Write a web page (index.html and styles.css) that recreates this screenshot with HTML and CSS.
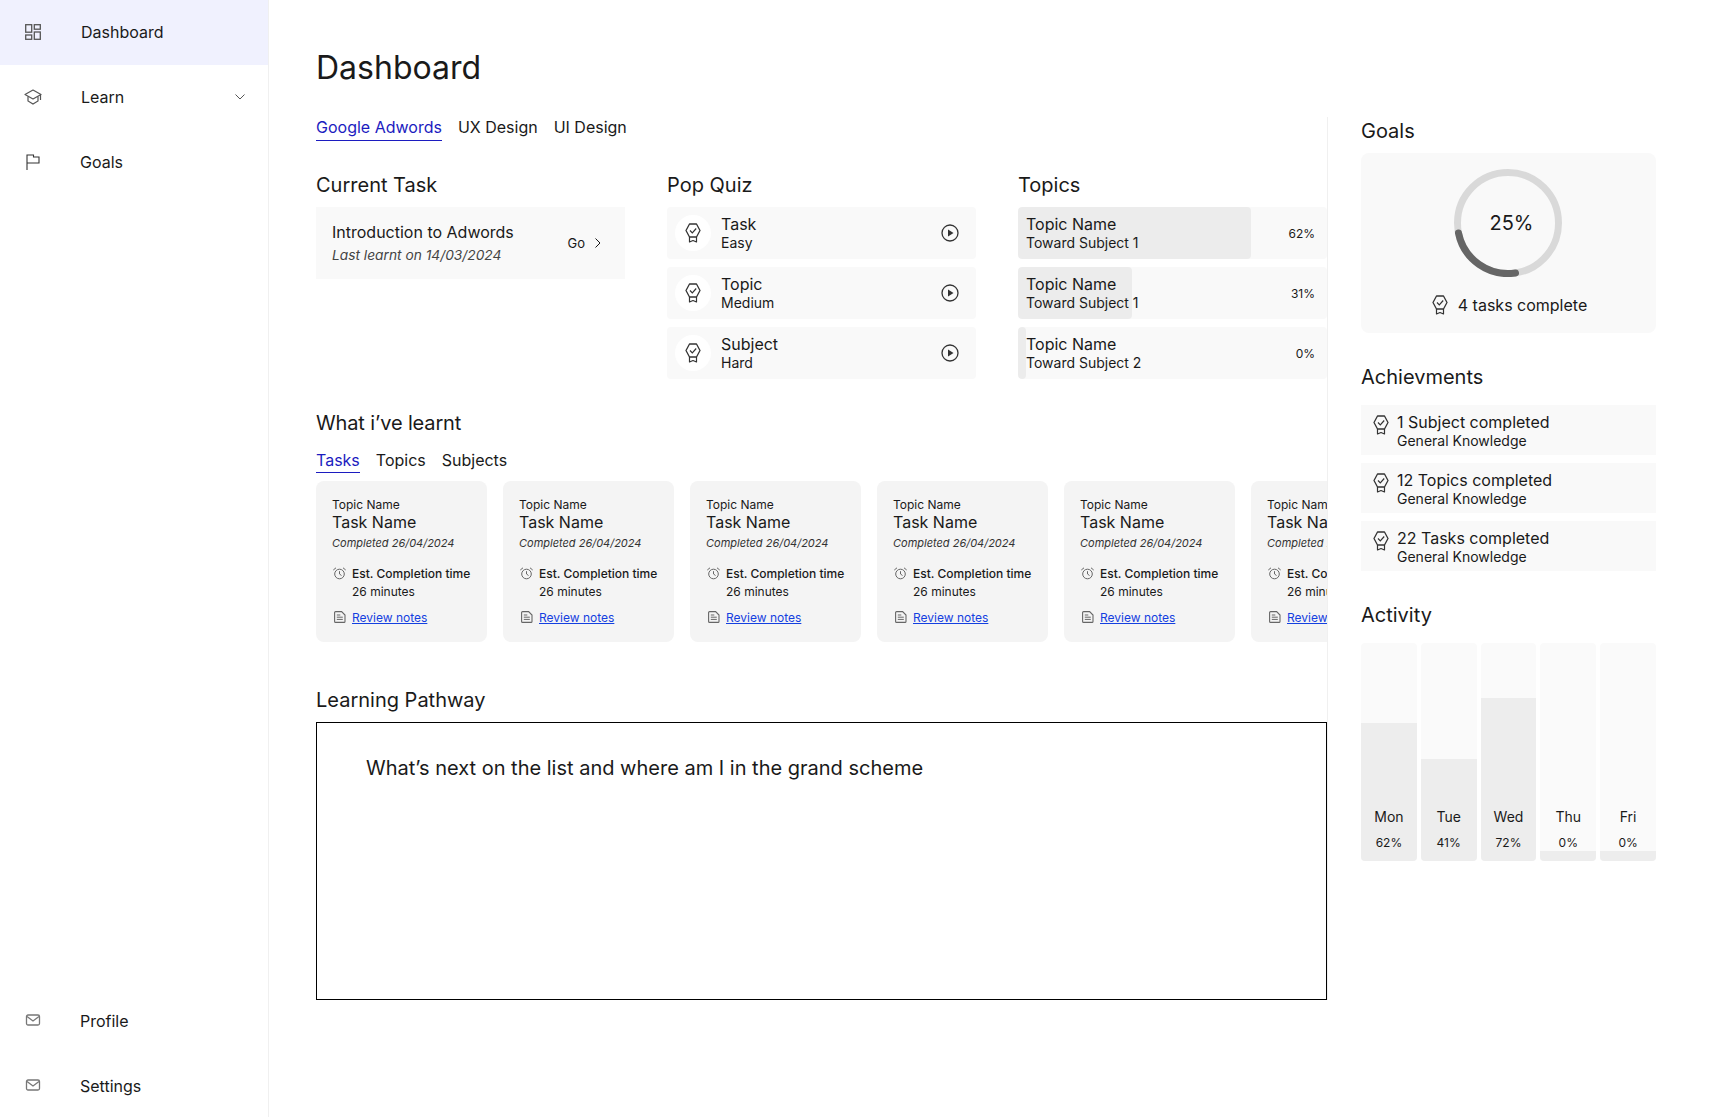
FILE: index.html
```html
<!DOCTYPE html>
<html>
<head>
  <meta charset="utf-8">
  <title>Dashboard</title>
  <link rel="stylesheet" href="styles.css">
</head>
<body>

<!-- shared icons -->
<svg class="defs" width="0" height="0">
  <symbol id="i-badge" viewBox="0 0 16 20">
    <path d="M4.500 1h7L15 7.500 11.500 14h-7L1 7.500z" fill="none" stroke="currentColor" stroke-width="1.3" stroke-linejoin="round"/>
    <path d="M5 7.500l2.300 2.300L11.200 5.500" fill="none" stroke="currentColor" stroke-width="1.2"/>
    <path d="M4.500 14v5L8 17.500l3.500 1.500v-5" fill="none" stroke="currentColor" stroke-width="1.2" stroke-linejoin="round"/>
  </symbol>
  <symbol id="i-mail" viewBox="0 0 16 12">
    <rect x="1.5" y="1" width="13" height="10" rx="1.5" fill="none" stroke="currentColor" stroke-width="1.3"/>
    <path d="M2 2.500L8 7l6-4.500" fill="none" stroke="currentColor" stroke-width="1.3"/>
  </symbol>
  <symbol id="i-play" viewBox="0 0 18 18">
    <circle cx="9" cy="9" r="8" fill="none" stroke="currentColor" stroke-width="1.3"/>
    <path d="M7 5.500v7l5.500-3.500z" fill="currentColor"/>
  </symbol>
  <symbol id="i-clock" viewBox="0 0 14 14">
    <circle cx="7.5" cy="8" r="4.800" fill="none" stroke="currentColor" stroke-width="1"/>
    <path d="M7.500 5.200V8l2 1.500M1.300 4L4 1.800M13.700 4L11 1.800" fill="none" stroke="currentColor" stroke-width="1"/>
  </symbol>
  <symbol id="i-doc" viewBox="0 0 14 14">
    <path d="M2.600 2.600a1 1 0 0 1 1-1h6l3.400 3.400v6.400a1 1 0 0 1-1 1H3.600a1 1 0 0 1-1-1z" fill="none" stroke="currentColor" stroke-width="1.1"/>
    <path d="M4.800 5h3.500M4.800 7.200h6M4.800 9.400h6" fill="none" stroke="currentColor" stroke-width="1"/>
  </symbol>
</svg>

<div class="app">

  <nav class="sidebar">
    <div class="nav-top">
      <a class="nav-item active">
        <svg class="nav-icon" viewBox="0 0 16 16"><rect x=".7" y=".7" width="6" height="7.500" fill="none" stroke="currentColor" stroke-width="1.3"/><rect x="9.300" y=".7" width="6" height="4.500" fill="none" stroke="currentColor" stroke-width="1.3"/><rect x=".7" y="11" width="6" height="4.300" fill="none" stroke="currentColor" stroke-width="1.3"/><rect x="9.300" y="8" width="6" height="7.300" fill="none" stroke="currentColor" stroke-width="1.3"/></svg>
        <span class="nav-label shifted">Dashboard</span>
      </a>
      <a class="nav-item">
        <svg class="nav-icon" viewBox="0 0 18 16"><path d="M9 1l8 4.500L9 10 1 5.500z" fill="none" stroke="currentColor" stroke-width="1.2" stroke-linejoin="round"/><path d="M4 7.500V12l5 3 5-3V7.500M16.500 5.500V11" fill="none" stroke="currentColor" stroke-width="1.2"/></svg>
        <span class="nav-label shifted">Learn</span>
        <svg class="nav-chevron" viewBox="0 0 10 6"><path d="M.5.5L5 5 9.500.5" fill="none" stroke="currentColor" stroke-width="1"/></svg>
      </a>
      <a class="nav-item">
        <svg class="nav-icon flag" viewBox="0 0 18 16"><path d="M3 16V1h6.500v2H15v6H3" fill="none" stroke="currentColor" stroke-width="1.1"/></svg>
        <span class="nav-label">Goals</span>
      </a>
    </div>
    <div class="nav-bottom">
      <a class="nav-item">
        <svg class="nav-icon mail"><use href="#i-mail"/></svg>
        <span class="nav-label">Profile</span>
      </a>
      <a class="nav-item">
        <svg class="nav-icon mail"><use href="#i-mail"/></svg>
        <span class="nav-label">Settings</span>
      </a>
    </div>
  </nav>

  <main class="main">
    <h1 class="page-title">Dashboard</h1>

    <div class="page-body">
      <div class="content">

        <div class="tabs">
          <a class="tab active">Google Adwords</a>
          <a class="tab">UX Design</a>
          <a class="tab">UI Design</a>
        </div>

        <div class="top-grid">
          <section>
            <h2 class="heading">Current Task</h2>
            <div class="current-task">
              <div>
                <div class="title-line">Introduction to Adwords</div>
                <div class="last-learnt">Last learnt on 14/03/2024</div>
              </div>
              <a class="go">Go
                <svg class="go-chevron" viewBox="0 0 6 10"><path d="M.5.5L5 5 .5 9.500" fill="none" stroke="currentColor" stroke-width="1"/></svg>
              </a>
            </div>
          </section>

          <section>
            <h2 class="heading">Pop Quiz</h2>
            <div class="row-list">
              <div class="quiz-row">
                <span class="quiz-badge"><svg class="badge"><use href="#i-badge"/></svg></span>
                <div class="quiz-text"><div class="title-line">Task</div><div class="sub-line">Easy</div></div>
                <svg class="play"><use href="#i-play"/></svg>
              </div>
              <div class="quiz-row">
                <span class="quiz-badge"><svg class="badge"><use href="#i-badge"/></svg></span>
                <div class="quiz-text"><div class="title-line">Topic</div><div class="sub-line">Medium</div></div>
                <svg class="play"><use href="#i-play"/></svg>
              </div>
              <div class="quiz-row">
                <span class="quiz-badge"><svg class="badge"><use href="#i-badge"/></svg></span>
                <div class="quiz-text"><div class="title-line">Subject</div><div class="sub-line">Hard</div></div>
                <svg class="play"><use href="#i-play"/></svg>
              </div>
            </div>
          </section>

          <section>
            <h2 class="heading">Topics</h2>
            <div class="row-list">
              <div class="topic-row">
                <div class="topic-fill" style="width: 233px"></div>
                <div class="topic-text"><div class="title-line">Topic Name</div><div class="sub-line">Toward Subject 1</div></div>
                <span class="topic-pct">62%</span>
              </div>
              <div class="topic-row">
                <div class="topic-fill" style="width: 114px"></div>
                <div class="topic-text"><div class="title-line">Topic Name</div><div class="sub-line">Toward Subject 1</div></div>
                <span class="topic-pct">31%</span>
              </div>
              <div class="topic-row">
                <div class="topic-fill" style="width: 8px"></div>
                <div class="topic-text"><div class="title-line">Topic Name</div><div class="sub-line">Toward Subject 2</div></div>
                <span class="topic-pct">0%</span>
              </div>
            </div>
          </section>
        </div>

        <section class="learnt">
          <h2 class="heading learnt-heading">What i’ve learnt</h2>
          <div class="tabs small-tabs">
            <a class="tab active">Tasks</a>
            <a class="tab">Topics</a>
            <a class="tab">Subjects</a>
          </div>
          <div class="task-cards">
            <div class="task-card">
              <div class="tc-topic">Topic Name</div>
              <div class="tc-task">Task Name</div>
              <div class="tc-date">Completed 26/04/2024</div>
              <div class="tc-est"><svg class="tc-icon"><use href="#i-clock"/></svg><div><strong>Est. Completion time</strong><br>26 minutes</div></div>
              <div class="tc-notes"><svg class="tc-icon"><use href="#i-doc"/></svg><a>Review notes</a></div>
            </div>
            <div class="task-card">
              <div class="tc-topic">Topic Name</div>
              <div class="tc-task">Task Name</div>
              <div class="tc-date">Completed 26/04/2024</div>
              <div class="tc-est"><svg class="tc-icon"><use href="#i-clock"/></svg><div><strong>Est. Completion time</strong><br>26 minutes</div></div>
              <div class="tc-notes"><svg class="tc-icon"><use href="#i-doc"/></svg><a>Review notes</a></div>
            </div>
            <div class="task-card">
              <div class="tc-topic">Topic Name</div>
              <div class="tc-task">Task Name</div>
              <div class="tc-date">Completed 26/04/2024</div>
              <div class="tc-est"><svg class="tc-icon"><use href="#i-clock"/></svg><div><strong>Est. Completion time</strong><br>26 minutes</div></div>
              <div class="tc-notes"><svg class="tc-icon"><use href="#i-doc"/></svg><a>Review notes</a></div>
            </div>
            <div class="task-card">
              <div class="tc-topic">Topic Name</div>
              <div class="tc-task">Task Name</div>
              <div class="tc-date">Completed 26/04/2024</div>
              <div class="tc-est"><svg class="tc-icon"><use href="#i-clock"/></svg><div><strong>Est. Completion time</strong><br>26 minutes</div></div>
              <div class="tc-notes"><svg class="tc-icon"><use href="#i-doc"/></svg><a>Review notes</a></div>
            </div>
            <div class="task-card">
              <div class="tc-topic">Topic Name</div>
              <div class="tc-task">Task Name</div>
              <div class="tc-date">Completed 26/04/2024</div>
              <div class="tc-est"><svg class="tc-icon"><use href="#i-clock"/></svg><div><strong>Est. Completion time</strong><br>26 minutes</div></div>
              <div class="tc-notes"><svg class="tc-icon"><use href="#i-doc"/></svg><a>Review notes</a></div>
            </div>
            <div class="task-card">
              <div class="tc-topic">Topic Name</div>
              <div class="tc-task">Task Name</div>
              <div class="tc-date">Completed 26/04/2024</div>
              <div class="tc-est"><svg class="tc-icon"><use href="#i-clock"/></svg><div><strong>Est. Completion time</strong><br>26 minutes</div></div>
              <div class="tc-notes"><svg class="tc-icon"><use href="#i-doc"/></svg><a>Review notes</a></div>
            </div>
          </div>
        </section>

        <section class="pathway">
          <h2 class="heading">Learning Pathway</h2>
          <div class="pathway-box">What’s next on the list and where am I in the grand scheme</div>
        </section>

      </div>

      <aside class="rail">
        <h2 class="heading">Goals</h2>
        <div class="goal-panel">
          <div class="ring">
            <svg viewBox="0 0 108 108" width="108" height="108">
              <circle cx="54" cy="54" r="50.5" fill="none" stroke="#d9d9d9" stroke-width="7"/>
              <path d="M4.500 64a50.500 50.500 0 0 0 57 40" fill="none" stroke="#666" stroke-width="7" stroke-linecap="round"/>
            </svg>
            <span class="ring-label">25%</span>
          </div>
          <div class="goal-note"><svg class="badge"><use href="#i-badge"/></svg>4 tasks complete</div>
        </div>

        <h2 class="heading rail-heading">Achievments</h2>
        <div class="achievements">
          <div class="achievement"><svg class="badge"><use href="#i-badge"/></svg><div><div class="title-line">1 Subject completed</div><div class="sub-line">General Knowledge</div></div></div>
          <div class="achievement"><svg class="badge"><use href="#i-badge"/></svg><div><div class="title-line">12 Topics completed</div><div class="sub-line">General Knowledge</div></div></div>
          <div class="achievement"><svg class="badge"><use href="#i-badge"/></svg><div><div class="title-line">22 Tasks completed</div><div class="sub-line">General Knowledge</div></div></div>
        </div>

        <h2 class="heading rail-heading">Activity</h2>
        <div class="activity">
          <div class="day"><div class="day-fill" style="height: 138px"></div><span class="day-name">Mon</span><span class="day-pct">62%</span></div>
          <div class="day"><div class="day-fill" style="height: 102px"></div><span class="day-name">Tue</span><span class="day-pct">41%</span></div>
          <div class="day"><div class="day-fill" style="height: 163px"></div><span class="day-name">Wed</span><span class="day-pct">72%</span></div>
          <div class="day"><div class="day-fill" style="height: 10px"></div><span class="day-name">Thu</span><span class="day-pct">0%</span></div>
          <div class="day"><div class="day-fill" style="height: 10px"></div><span class="day-name">Fri</span><span class="day-pct">0%</span></div>
        </div>
      </aside>
    </div>
  </main>

</div>

</body>
</html>
```

FILE: styles.css
```css
* {
  box-sizing: border-box;
}
body {
  margin: 0;
  font-family: Inter, sans-serif;
  color: #1a1a1a;
  background: #fff;
}
.defs {
  position: absolute;
}
.app {
  display: flex;
  height: 1117px;
  overflow: hidden;
}

/* sidebar */
.sidebar {
  width: 269px;
  flex: none;
  display: flex;
  flex-direction: column;
  justify-content: space-between;
  border-right: 1px solid #f0f0f0;
}
.nav-item {
  display: flex;
  align-items: center;
  height: 65px;
  padding: 0 0 1px 24px;
  font-size: 16px;
}
.nav-bottom .nav-item {
  height: 64.5px;
  padding: 1.5px 0 0 24px;
}
.nav-item.active {
  background: #f0f1fe;
}
.nav-icon {
  width: 18px;
  height: 16px;
  margin-right: 38px;
  color: #555;
  flex: none;
}
.nav-icon.flag {
  color: #333;
}
.nav-icon.mail {
  height: 12px;
  margin-bottom: 2px;
  color: #777;
}
.nav-label.shifted {
  margin-left: 1px;
}
.nav-chevron {
  width: 10px;
  height: 6px;
  margin-left: auto;
  margin-right: 23px;
  color: #555;
}

/* main */
.main {
  flex: 1;
  padding: 48px 0 0 47px;
}
.page-title {
  margin: 0;
  font-size: 32px;
  line-height: 40px;
  font-weight: 400;
}
.page-body {
  display: flex;
  margin-top: 29px;
}
.content {
  width: 1012px;
  flex: none;
  border-right: 1px solid #f0f0f0;
  overflow: hidden;
}
.heading {
  margin: 0 0 10px;
  font-size: 20px;
  line-height: 24px;
  font-weight: 400;
}

/* tabs */
.tabs {
  display: flex;
  gap: 16px;
}
.tab {
  font-size: 16px;
  line-height: 20px;
  padding: 0 0 3px;
  border-bottom: 1px solid transparent;
}
.tab.active {
  color: #1c1cc0;
  border-bottom-color: #1c1cc0;
}
.top-grid {
  display: grid;
  grid-template-columns: repeat(3, 1fr);
  gap: 42px;
  margin-top: 32px;
}

/* rows */
.title-line {
  font-size: 16px;
  line-height: 20px;
}
.sub-line {
  font-size: 14px;
  line-height: 18px;
}
.current-task {
  display: flex;
  align-items: center;
  justify-content: space-between;
  height: 72px;
  padding: 0 24px 1px 16px;
  background: #f9f9f9;
}
.last-learnt {
  margin-top: 4px;
  font-size: 13.75px;
  line-height: 18px;
  font-style: italic;
  color: #444;
}
.go {
  display: flex;
  align-items: center;
  gap: 10px;
  font-size: 13px;
}
.go-chevron {
  width: 6px;
  height: 10px;
}
.row-list {
  display: flex;
  flex-direction: column;
  gap: 8px;
}
.quiz-row,
.topic-row {
  display: flex;
  align-items: center;
  height: 52px;
  background: #f9f9f9;
  border-radius: 4px;
}
.quiz-row {
  padding: 0 17px 0 8px;
}
.quiz-badge {
  display: flex;
  align-items: center;
  justify-content: center;
  width: 36px;
  height: 36px;
  border-radius: 50%;
  background: #fff;
}
.badge {
  width: 16px;
  height: 20px;
  color: #333;
  flex: none;
}
.quiz-text {
  margin-left: 10px;
}
.play {
  width: 18px;
  height: 18px;
  margin-left: auto;
  color: #333;
}
.topic-row {
  position: relative;
  padding: 0 12px 0 8px;
  overflow: hidden;
}
.topic-fill {
  position: absolute;
  left: 0;
  top: 0;
  bottom: 0;
  background: #ececec;
  border-radius: 4px;
}
.topic-text {
  position: relative;
}
.topic-pct {
  position: relative;
  margin-left: auto;
  font-size: 12px;
}

/* what i've learnt */
.learnt {
  margin-top: 32px;
}
.learnt-heading {
  margin-bottom: 15px;
  letter-spacing: -.15px;
}
.small-tabs .tab {
  padding-bottom: 2px;
}
.task-cards {
  display: flex;
  gap: 16px;
  margin-top: 8px;
}
.task-card {
  width: 171px;
  height: 161px;
  flex: none;
  padding: 16px;
  background: #f4f4f4;
  border-radius: 8px;
}
.tc-topic {
  margin-top: 1px;
  font-size: 12px;
  line-height: 14px;
}
.tc-task {
  font-size: 16px;
  line-height: 20px;
}
.tc-date {
  margin-top: 3px;
  font-size: 11px;
  line-height: 16px;
  font-style: italic;
  color: #333;
  white-space: nowrap;
}
.tc-est,
.tc-notes {
  display: flex;
  gap: 6px;
  font-size: 12px;
  white-space: nowrap;
}
.tc-est {
  margin-top: 14px;
  line-height: 18px;
}
.tc-est strong {
  font-weight: 500;
}
.tc-notes {
  margin-top: 8px;
  line-height: 18px;
}
.tc-notes a {
  color: #1440e0;
  text-decoration: underline;
}
.tc-icon {
  width: 14px;
  height: 14px;
  margin-top: 1px;
  color: #666;
  flex: none;
}

/* pathway */
.pathway {
  margin-top: 46px;
}
.pathway-box {
  height: 278px;
  padding: 33px 49px;
  border: 1px solid #000;
  font-size: 20px;
  line-height: 24px;
}

/* right rail */
.rail {
  width: 295px;
  flex: none;
  margin-left: 33px;
  padding-top: 2px;
}
.rail-heading {
  margin-top: 32px;
  margin-bottom: 16px;
}
.goal-panel {
  height: 180px;
  padding-top: 16px;
  background: #f9f9f9;
  border-radius: 8px;
  text-align: center;
}
.ring {
  position: relative;
  width: 108px;
  height: 108px;
  margin-left: 93px;
}
.ring svg {
  display: block;
}
.ring-label {
  position: absolute;
  left: 7px;
  right: 0;
  top: 42px;
  font-size: 20px;
  line-height: 24px;
}
.goal-note {
  display: flex;
  align-items: center;
  justify-content: center;
  gap: 10px;
  margin-top: 18px;
  padding-left: 2px;
  font-size: 16px;
  line-height: 20px;
}
.achievements {
  display: flex;
  flex-direction: column;
  gap: 8px;
}
.achievement {
  display: flex;
  gap: 8px;
  height: 50px;
  padding: 7px 12px;
  background: #f9f9f9;
}
.achievement .badge {
  margin-top: 3px;
}
.activity {
  display: flex;
  gap: 4px;
}
.day {
  position: relative;
  flex: 1;
  height: 218px;
  display: flex;
  flex-direction: column;
  justify-content: flex-end;
  align-items: center;
  padding-bottom: 10px;
  background: #fafafa;
  border-radius: 4px;
  overflow: hidden;
}
.day-fill {
  position: absolute;
  left: 0;
  right: 0;
  bottom: 0;
  background: #ededed;
}
.day-name,
.day-pct {
  position: relative;
}
.day-name {
  font-size: 14px;
  line-height: 18px;
  margin-bottom: 9px;
}
.day-pct {
  font-size: 12px;
  line-height: 16px;
}
```
